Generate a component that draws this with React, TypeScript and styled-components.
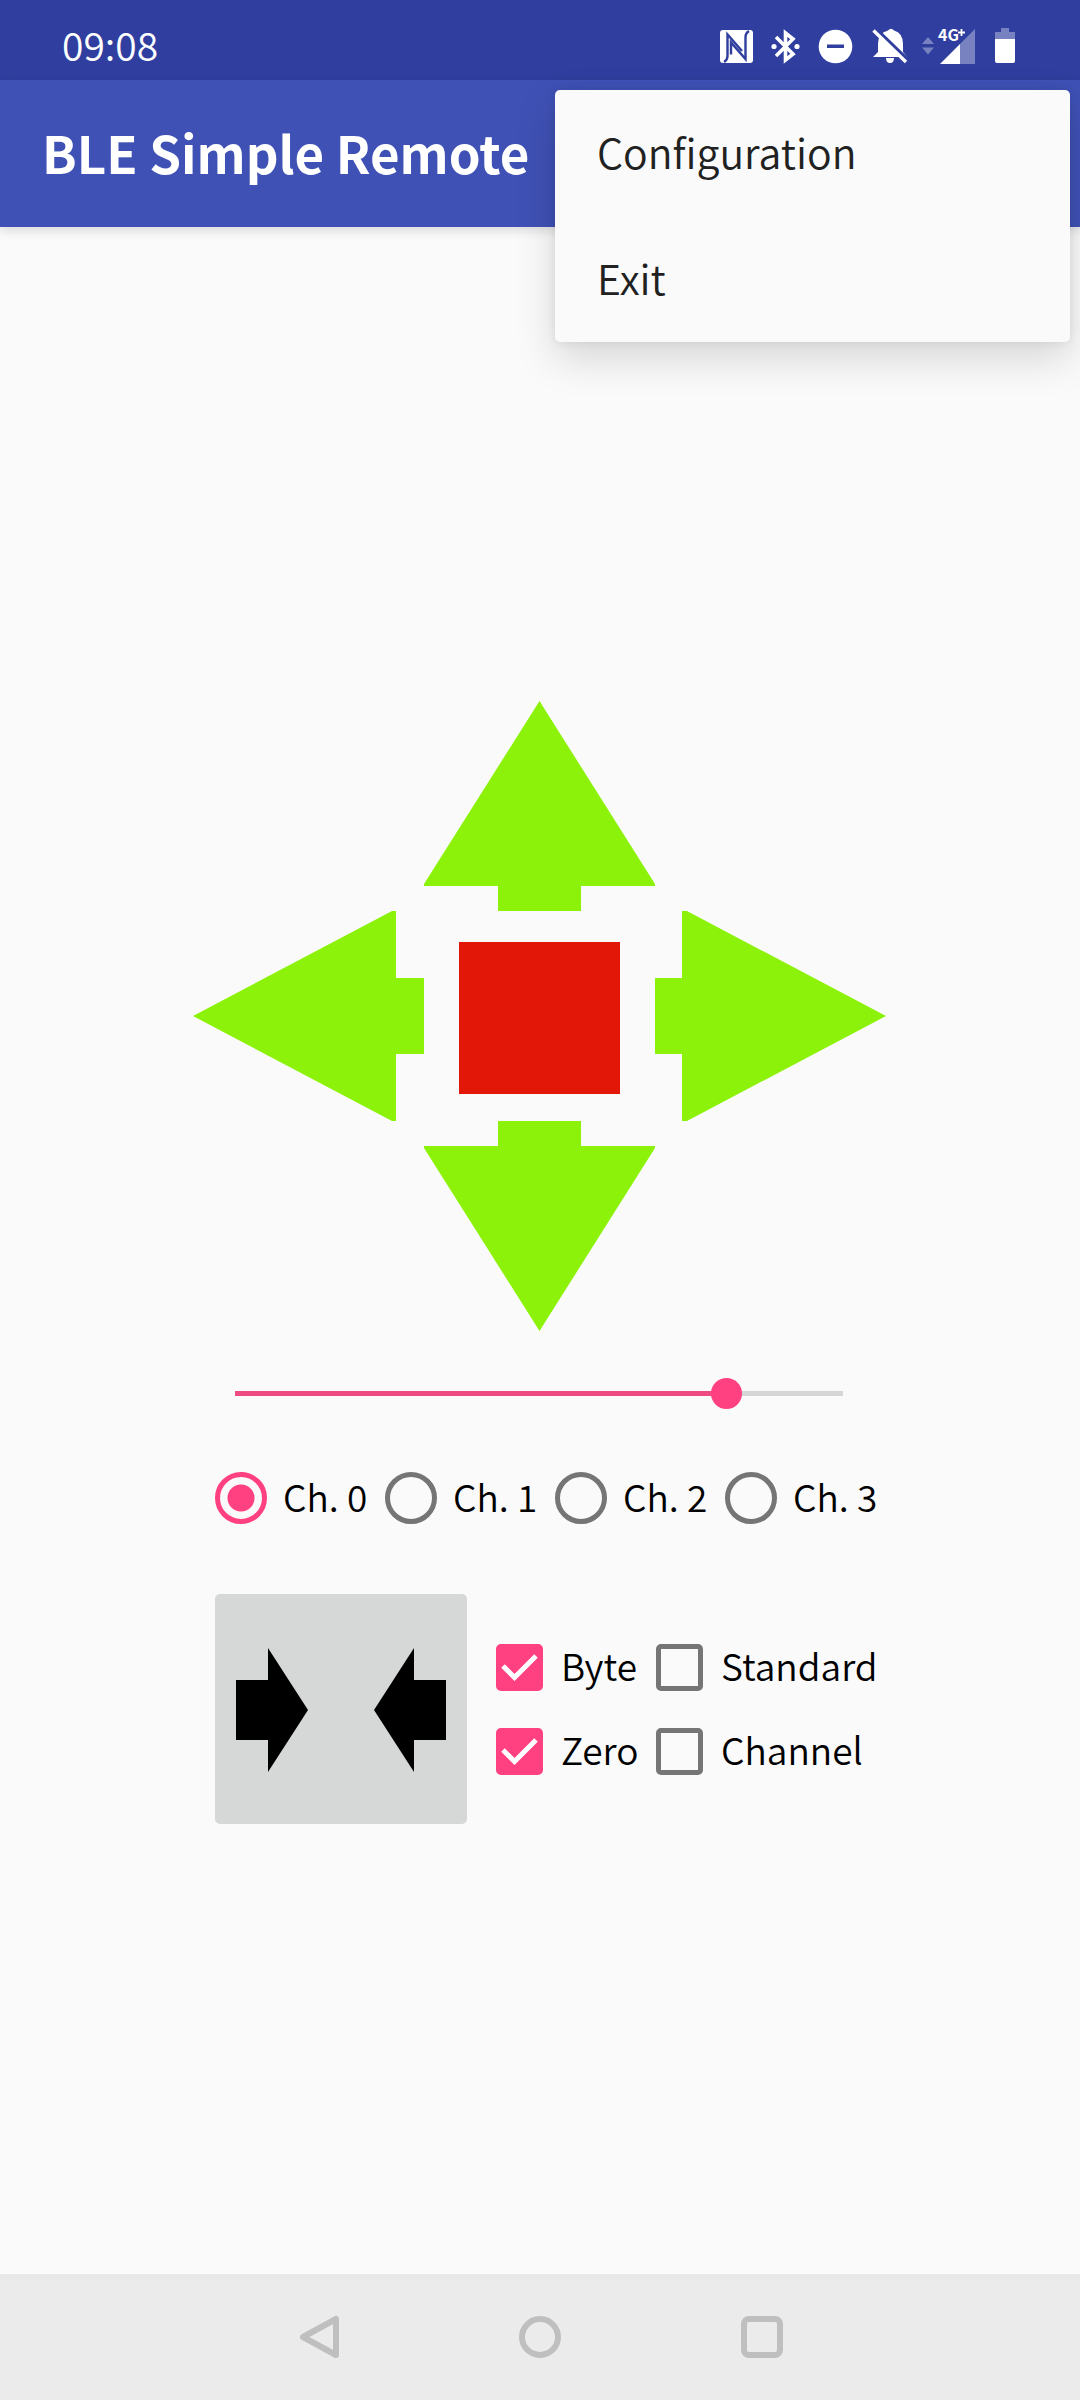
import React, { useState } from 'react';
import styled, { createGlobalStyle, css } from 'styled-components';

const pink = '#ff4081';

const GlobalStyle = createGlobalStyle`
  *, *::before, *::after { box-sizing: border-box; }
  body { margin: 0; background: #fafafa; }
  button, input { font: inherit; margin: 0; padding: 0; border: 0; }
`;

const Screen = styled.div`
  position: relative;
  display: flex;
  flex-direction: column;
  min-height: 100vh;
  background: #fafafa;
  color: #000;
  font-family: 'Noto Sans CJK SC', 'Noto Sans', sans-serif;
  font-size: 37px;
  font-weight: 350;
  line-height: 48px;
`;

const StatusBar = styled.div`
  display: flex;
  align-items: center;
  justify-content: space-between;
  height: 80px;
  padding: 8px 62px 0;
  background: #303f9f;
  color: #fff;
`;

const Time = styled.time`
  font-size: 39px;
`;

const StatusIcons = styled.svg`
  display: block;
  width: 300px;
  height: 60px;
`;

const AppBar = styled.header`
  display: flex;
  align-items: center;
  height: 147px;
  padding: 0 42px 4px;
  background: #3f51b5;
  color: #fff;
  box-shadow: 0 4px 10px rgba(0, 0, 0, 0.12);
`;

const Title = styled.h1`
  margin: 0;
  font-size: 51px;
  line-height: 72px;
  font-weight: 700;
`;

const Menu = styled.div`
  position: absolute;
  top: 90px;
  right: 10px;
  width: 515px;
  display: flex;
  flex-direction: column;
  border-radius: 5px;
  background: #fafafa;
  box-shadow: 0 16px 40px rgba(0, 0, 0, 0.15), 0 0 10px rgba(0, 0, 0, 0.08);
`;

const MenuItem = styled.button`
  height: 126px;
  padding: 0 42px 4px;
  background: none;
  color: #212121;
  font-size: 41px;
  text-align: left;
`;

const Main = styled.main`
  flex: 1;
  display: flex;
  flex-direction: column;
  align-items: center;
  justify-content: center;
  padding: 24px 2px 0 0;
`;

const Pad = styled.div`
  display: grid;
  grid-template-columns: repeat(3, 231px);
  grid-template-rows: repeat(3, 210px);
  grid-template-areas: '. up .' 'left stop right' '. down .';
`;

const PadButton = styled.button<{ $area: string }>`
  grid-area: ${(p) => p.$area};
  background: none;

  svg {
    display: block;
    width: 231px;
    height: 210px;
  }
`;

const Slider = styled.input`
  appearance: none;
  width: 640px;
  height: 52px;
  margin: 36px 0 53px;
  background:
    linear-gradient(#ed4b82, #ed4b82) 16px center / var(--fill) 5px no-repeat,
    linear-gradient(#d5d5d5, #d5d5d5) center / 608px 5px no-repeat;

  &::-webkit-slider-thumb {
    appearance: none;
    width: 31px;
    height: 31px;
    border-radius: 50%;
    background: ${pink};
  }
`;

const Channels = styled.div`
  display: grid;
  grid-template-columns: repeat(4, 170px);
  width: 680px;
  padding-left: 16px;
`;

const LabelText = styled.span`
  padding-bottom: 4px;
  white-space: nowrap;
`;

const RadioLabel = styled.label`
  display: flex;
  align-items: center;
  gap: 16px;
`;

const Radio = styled.input`
  appearance: none;
  flex: none;
  width: 52px;
  height: 52px;
  border: 5px solid #757575;
  border-radius: 50%;

  &:checked {
    border-color: ${pink};
    background: radial-gradient(circle, ${pink} 13px, transparent 14px);
  }
`;

const Options = styled.div`
  display: flex;
  align-items: center;
  gap: 29px;
  width: 680px;
  margin-top: 70px;
  padding-left: 16px;
`;

const CenterButton = styled.button`
  display: flex;
  align-items: center;
  justify-content: center;
  width: 252px;
  height: 230px;
  border-radius: 5px;
  background: #d6d7d7;
`;

const Checks = styled.div`
  display: grid;
  grid-template-columns: 160px auto;
  grid-auto-rows: 84px;
`;

const CheckLabel = styled.label`
  display: flex;
  align-items: center;
  gap: 18px;
`;

const box = css`
  width: 47px;
  height: 47px;
`;

const CheckBox = styled.span`
  position: relative;
  flex: none;
  ${box}

  svg {
    position: absolute;
    inset: 0;
    ${box}
    pointer-events: none;
  }
`;

const CheckInput = styled.input`
  appearance: none;
  display: block;
  ${box}
  border: 5px solid #757575;
  border-radius: 5px;

  &:checked {
    border-color: ${pink};
    background: ${pink};
  }
`;

const NavBar = styled.nav`
  display: flex;
  align-items: center;
  justify-content: center;
  gap: 137px;
  height: 126px;
  border-top: 6px solid #e8e8e8;
  padding-bottom: 6px;
  background: #ebebeb;
`;

const NavButton = styled.button`
  width: 84px;
  height: 84px;
  background: none;

  svg {
    display: block;
    width: 84px;
    height: 84px;
    fill: none;
    stroke: #bfbfbf;
    stroke-width: 6;
    stroke-linejoin: round;
  }
`;

const arrows = [
  { area: 'up', label: 'Forward', points: '115.5,0 231,183 231,185 157,185 157,210 74,210 74,185 0,185 0,183' },
  { area: 'left', label: 'Left', points: '0,105 199,0 203,0 203,67 231,67 231,143 203,143 203,210 199,210' },
  { area: 'right', label: 'Right', points: '231,105 32,0 27,0 27,67 0,67 0,143 27,143 27,210 32,210' },
  { area: 'down', label: 'Backward', points: '115.5,210 231,27 231,25 157,25 157,0 74,0 74,25 0,25 0,27' },
];

function Indicators() {
  return (
    <StatusIcons viewBox="718 14 300 60" fill="#fff" role="img" aria-label="Phone status">
      <rect x="720" y="30" width="33" height="33" rx="3" />
      <path
        d="M724 62q3.500-2 3.500-6V34.500L742 51M749 31q-3.500 2-3.500 6v22L731 42.500v12"
        fill="none"
        stroke="#303f9f"
        strokeWidth="2.400"
      />
      <g fill="none" stroke="#fff" strokeWidth="3.600">
        <path d="M776 37l17 17-7.500 6V33l7.500 6-17 17" />
      </g>
      <circle cx="774" cy="46.500" r="2.600" />
      <circle cx="797" cy="46.500" r="2.600" />
      <circle cx="835.500" cy="46.500" r="16.800" />
      <path d="M827 44.500h17v3.500h-17z" fill="#303f9f" />
      <path d="M873 57l5-5V44q0-11 10-13.500 3-3.500 6 0 9 2.500 9 13.500v8l4 5z" />
      <path d="M886 58h8q0 5-4 5t-4-5z" />
      <path d="M875 28l34 33" stroke="#303f9f" strokeWidth="3.500" />
      <path d="M873.500 30.500L906 62" stroke="#fff" strokeWidth="3.400" />
      <path d="M922 44l6-7 6 7zM922 47.500l6 7 6-7z" opacity=".35" />
      <path d="M975 29v35h-15V44z" opacity=".35" />
      <path d="M960 44v20h-20z" />
      <text x="938" y="41" fontFamily="Noto Sans CJK SC, sans-serif" fontSize="16" fontWeight="700">4G</text>
      <path d="M961.500 29v7M958 32.500h7" stroke="#fff" strokeWidth="1.800" />
      <path d="M995 39v-7h6v-4h8v4h6v7z" opacity=".35" />
      <path d="M995 39h20v22q0 2-2 2h-16q-2 0-2-2z" />
    </StatusIcons>
  );
}

function Check({ label, initial }: { label: string; initial: boolean }) {
  const [on, setOn] = useState(initial);
  return (
    <CheckLabel>
      <CheckBox>
        <CheckInput type="checkbox" checked={on} onChange={() => setOn(!on)} />
        {on && (
          <svg viewBox="0 0 47 47" fill="none" stroke="#fff" strokeWidth="5" aria-hidden="true">
            <path d="M7 22l11.500 11.500L40 12" />
          </svg>
        )}
      </CheckBox>
      <LabelText>{label}</LabelText>
    </CheckLabel>
  );
}

export default function App() {
  const [speed, setSpeed] = useState(206);
  const [channel, setChannel] = useState(0);

  return (
    <Screen>
      <GlobalStyle />
      <StatusBar>
        <Time>09:08</Time>
        <Indicators />
      </StatusBar>
      <AppBar>
        <Title>BLE Simple Remote</Title>
      </AppBar>
      <Menu role="menu">
        <MenuItem role="menuitem">Configuration</MenuItem>
        <MenuItem role="menuitem">Exit</MenuItem>
      </Menu>
      <Main>
        <Pad>
          {arrows.map((a) => (
            <PadButton key={a.area} $area={a.area} aria-label={a.label}>
              <svg viewBox="0 0 231 210" fill="#8cf20a">
                <polygon points={a.points} />
              </svg>
            </PadButton>
          ))}
          <PadButton $area="stop" aria-label="Stop">
            <svg viewBox="0 0 231 210" fill="#e31708">
              <rect x="35" y="31" width="161" height="152" />
            </svg>
          </PadButton>
        </Pad>
        <Slider
          type="range"
          min={0}
          max={255}
          value={speed}
          aria-label="Speed"
          onChange={(e) => setSpeed(Number(e.target.value))}
          style={{ '--fill': `${Math.round((speed / 255) * 608)}px` } as React.CSSProperties}
        />
        <Channels role="radiogroup" aria-label="Channel">
          {[0, 1, 2, 3].map((n) => (
            <RadioLabel key={n}>
              <Radio type="radio" name="channel" checked={channel === n} onChange={() => setChannel(n)} />
              <LabelText>Ch. {n}</LabelText>
            </RadioLabel>
          ))}
        </Channels>
        <Options>
          <CenterButton aria-label="Center">
            <svg width="210" height="188" viewBox="0 0 210 188" aria-hidden="true">
              <path d="M0 65h32V33l40 62-40 62v-32H0zM210 65h-32V33l-40 62 40 62v-32h32z" />
            </svg>
          </CenterButton>
          <Checks>
            <Check label="Byte" initial />
            <Check label="Standard" initial={false} />
            <Check label="Zero" initial />
            <Check label="Channel" initial={false} />
          </Checks>
        </Options>
      </Main>
      <NavBar>
        <NavButton aria-label="Back">
          <svg viewBox="0 0 84 84">
            <path d="M26 42L59 24v36z" />
          </svg>
        </NavButton>
        <NavButton aria-label="Home">
          <svg viewBox="0 0 84 84">
            <circle cx="42" cy="42" r="18" />
          </svg>
        </NavButton>
        <NavButton aria-label="Recent apps">
          <svg viewBox="0 0 84 84">
            <rect x="25" y="24" width="36" height="36" rx="5" />
          </svg>
        </NavButton>
      </NavBar>
    </Screen>
  );
}
